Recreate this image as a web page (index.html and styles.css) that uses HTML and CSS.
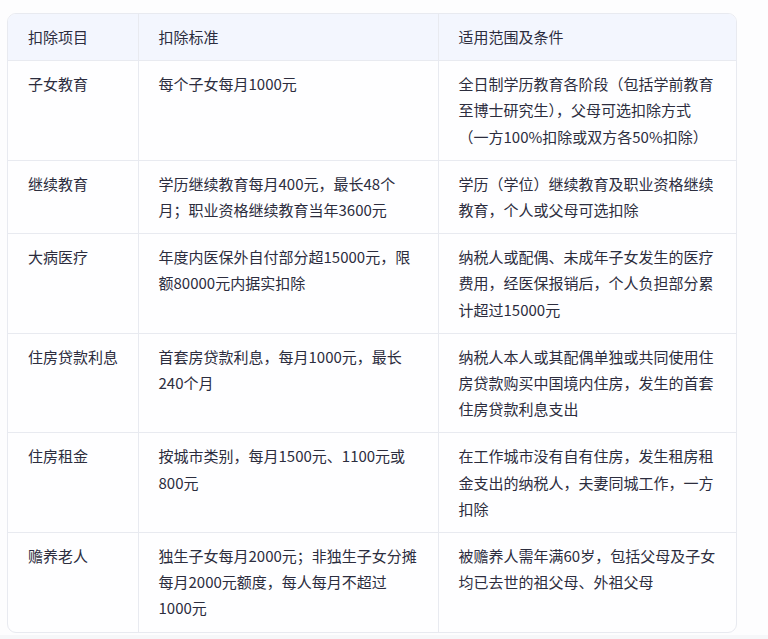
FILE: index.html
```html
<!DOCTYPE html>
<html lang="zh-CN">
<head>
<meta charset="utf-8">
<title>专项附加扣除</title>
<link rel="stylesheet" href="styles.css">
</head>
<body>
<div class="page">
  <div class="table-wrap">
    <table class="deduct">
      <colgroup>
        <col class="c1"><col class="c2"><col class="c3">
      </colgroup>
      <thead>
        <tr><th>扣除项目</th><th>扣除标准</th><th>适用范围及条件</th></tr>
      </thead>
      <tbody>
        <tr><td>子女教育</td><td>每个子女每月1000元</td><td>全日制学历教育各阶段（包括学前教育至博士研究生），父母可选扣除方式（一方100%扣除或双方各50%扣除）</td></tr>
        <tr><td>继续教育</td><td>学历继续教育每月400元，最长48个月；职业资格继续教育当年3600元</td><td>学历（学位）继续教育及职业资格继续教育，个人或父母可选扣除</td></tr>
        <tr><td>大病医疗</td><td>年度内医保外自付部分超15000元，限额80000元内据实扣除</td><td>纳税人或配偶、未成年子女发生的医疗费用，经医保报销后，个人负担部分累计超过15000元</td></tr>
        <tr><td>住房贷款利息</td><td>首套房贷款利息，每月1000元，最长240个月</td><td>纳税人本人或其配偶单独或共同使用住房贷款购买中国境内住房，发生的首套住房贷款利息支出</td></tr>
        <tr><td>住房租金</td><td>按城市类别，每月1500元、1100元或800元</td><td>在工作城市没有自有住房，发生租房租金支出的纳税人，夫妻同城工作，一方扣除</td></tr>
        <tr><td>赡养老人</td><td>独生子女每月2000元；非独生子女分摊每月2000元额度，每人每月不超过1000元</td><td>被赡养人需年满60岁，包括父母及子女均已去世的祖父母、外祖父母</td></tr>
      </tbody>
    </table>
  </div>
</div>
</body>
</html>
```

FILE: styles.css
```css
html {
  background: #f6f7f9;
}
body {
  margin: 0;
  font-family: "Noto Sans CJK SC", "Noto Sans", sans-serif;
  color: #2c2d3e;
}
.page {
  background: #fdfdfe;
  padding: 13px 31px 2px 7px;
}
.table-wrap {
  border: 1px solid #e8eaf0;
  border-radius: 9px;
  overflow: hidden;
  background: #fefeff;
}
.deduct {
  width: 100%;
  border-collapse: collapse;
  table-layout: fixed;
  font-size: 15px;
  line-height: 26.2px;
}
.c1 { width: 130px; }
.c2 { width: 300px; }
.c3 { width: auto; }
.deduct th,
.deduct td {
  padding: 10px 20px 10px 20px;
  text-align: left;
  vertical-align: top;
  border-left: 1px solid #e8eaf0;
  border-top: 1px solid #e8eaf0;
  word-break: normal;
}
.deduct th:first-child,
.deduct td:first-child {
  border-left: none;
  white-space: nowrap;
}
.deduct thead th {
  border-top: none;
  background: #f3f6fe;
  font-weight: normal;
}
```
